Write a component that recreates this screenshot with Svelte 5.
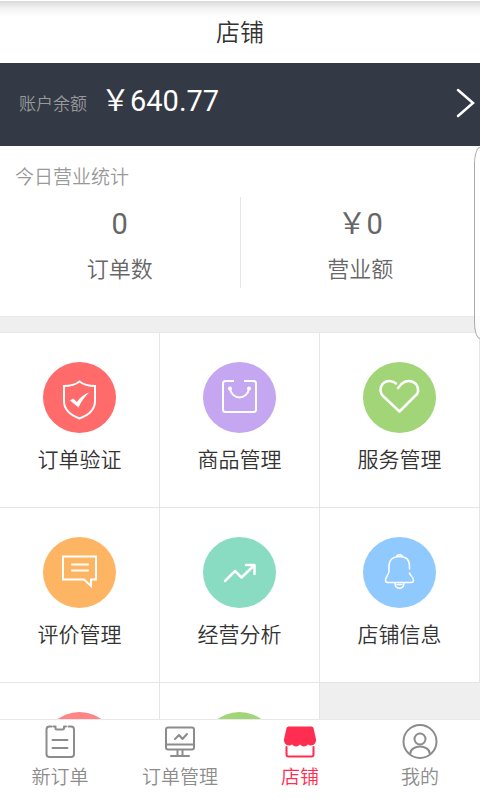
<script>
  const menus = [
    { name: '订单验证', icon: 'shield', color: 'red' },
    { name: '商品管理', icon: 'bag', color: 'purple' },
    { name: '服务管理', icon: 'heart', color: 'green' },
    { name: '评价管理', icon: 'comment', color: 'orange' },
    { name: '经营分析', icon: 'chart', color: 'teal' },
    { name: '店铺信息', icon: 'bell', color: 'blue' },
    { name: '', icon: '', color: 'pink' },
    { name: '', icon: '', color: 'green' }
  ];

  const tabs = [
    { name: '新订单', icon: 'order' },
    { name: '订单管理', icon: 'screen' },
    { name: '店铺', icon: 'shop' },
    { name: '我的', icon: 'user' }
  ];

  let balance = $state('640.77');
  let orderCount = $state(0);
  let turnover = $state(0);
  let current = $state('shop');
</script>

<div class="page">
  <header class="title-bar">
    <h1>店铺</h1>
  </header>

  <main>
    <button class="balance" type="button">
      <span class="balance-label">账户余额</span>
      <span class="balance-value">￥{balance}</span>
      <svg class="arrow" viewBox="0 0 20 30" aria-hidden="true">
        <path d="M3 2L18 15L3 28" />
      </svg>
    </button>

    <section class="stats">
      <h2>今日营业统计</h2>
      <div class="stats-row">
        <div class="stat">
          <span class="stat-value">{orderCount}</span>
          <span class="stat-label">订单数</span>
        </div>
        <div class="stat">
          <span class="stat-value">￥{turnover}</span>
          <span class="stat-label">营业额</span>
        </div>
      </div>
    </section>

    <nav class="menu">
      {#each menus as menu}
        <button class="menu-item" type="button">
          <span class="circle {menu.color}">
            <svg viewBox="0 0 73 71" aria-hidden="true">
              {#if menu.icon === 'shield'}
                <path d="M36.5 19.5C32 23 27 24 21 24V39C21 47 27 53 36.5 56.5C46 53 52 47 52 39V24C46 24 41 23 36.5 19.5Z" />
                <path class="solid" d="M27 38.5L30 36.5L34 40C37 35.5 41 32 46 30.5C42 34.5 38 39.5 35.5 45.5Z" />
              {:else if menu.icon === 'bag'}
                <path d="M31 19H22.5Q20 19 20 21.5V47.5Q20 50 22.5 50H50.5Q53 50 53 47.5V21.5Q53 19 50.5 19H41" />
                <path d="M27 27C28 32 32 35.5 36.5 35.5S45 32 46 27" />
                <circle class="solid" cx="27" cy="26.5" r="2" />
                <circle class="solid" cx="46" cy="26.5" r="2" />
              {:else if menu.icon === 'heart'}
                <path class="thick" d="M33 21.5C29 18 23 18 19.5 22C16.5 26 17 31 20 34L36.5 49.5L52 34C56 31 56 26 53 22C49 18 42.5 18 38.5 22L35 26" />
              {:else if menu.icon === 'comment'}
                <path d="M20 19.5H53V42.5H48V49L41 42.5H20Z" />
                <path d="M29 27.5H45M29 33.5H45" stroke-linecap="round" />
              {:else if menu.icon === 'chart'}
                <path class="thick" d="M22 44L32 34L38.5 40.5L51 28.5M43 28H51.5V37" />
              {:else if menu.icon === 'bell'}
                <path class="thin" d="M46.5 32V29C46.5 23 43 19.5 36.5 19.5S26 23 26 29V34C26 38 22.5 39.5 22.5 43.5Q22.5 45.5 25 45.5H48Q50.5 45.5 50.5 43.5C50.5 40 47 38.5 46.5 36" />
                <path class="thin" d="M33.5 20C34 17 39 17 39.5 20M32 46C32 53 41 53 41 46M34 47.5H39" />
              {/if}
            </svg>
          </span>
          <span class="menu-name">{menu.name}</span>
        </button>
      {/each}
    </nav>
  </main>

  <nav class="tabs">
    {#each tabs as tab}
      <button class="tab" class:active={current === tab.icon} type="button" onclick={() => (current = tab.icon)}>
        <svg viewBox="0 0 36 36" aria-hidden="true">
          {#if tab.icon === 'order'}
            <path d="M9.5 2.5H7.5Q4.5 2.5 4.5 5.5V30Q4.5 33 7.5 33H29Q32 33 32 30V5.5Q32 2.5 29 2.5H26.5M11.5 2.5H13.5V4Q13.5 5.5 15 5.5H20.5Q22 5.5 22 4V2.5H24" />
            <path d="M10.5 16H25.5M10.5 24H25.5" />
          {:else if tab.icon === 'screen'}
            <rect x="4" y="3.5" width="28" height="22" rx="2" />
            <path d="M4 20.5H32M15.5 26V31M20.5 26V31M9 32H27" />
            <path d="M13 15L17 11L20.5 15L25 10" />
          {:else if tab.icon === 'shop'}
            <path class="solid" d="M6.5 2.5H29.5Q31 2.5 31.5 4L34 15.5C34.5 20 30 23 26 20.5C23.5 23 20.5 23 18 20.5C15.5 23 12.5 23 10 20.5C6 23 1.5 20 2 15.5L4.5 4Q5 2.5 6.5 2.5Z" />
            <path d="M4.5 23V30.5Q4.5 32.5 6.5 32.5H29.5Q31.5 32.5 31.5 30.5V23" />
          {:else}
            <circle cx="18" cy="17.5" r="16.5" />
            <circle cx="18" cy="15" r="5.5" />
            <path d="M8 30C9 20 27 20 28 30" />
          {/if}
        </svg>
        <span>{tab.name}</span>
      </button>
    {/each}
  </nav>

  <div class="edge-handle"></div>
</div>

<style>
  :global(body) {
    margin: 0;
    background: #efefef;
  }

  .page {
    display: flex;
    flex-direction: column;
    height: 100vh;
    font-family: Roboto, "Noto Sans CJK SC", sans-serif;
    font-weight: 350;
    color: #333;
  }

  button {
    margin: 0;
    padding: 0;
    border: none;
    background: none;
    font: inherit;
    color: inherit;
    cursor: pointer;
  }

  h1,
  h2 {
    margin: 0;
    font-weight: inherit;
  }

  svg {
    fill: none;
    stroke: currentColor;
    stroke-width: 2;
  }

  .solid {
    fill: currentColor;
    stroke: none;
  }

  .title-bar {
    flex: none;
    height: 63px;
    background: linear-gradient(#fff 1px, #d8d9d8 1px, #f2f2f2 8px, #fff 17px);
  }

  h1 {
    font-size: 24px;
    line-height: 66px;
    text-align: center;
  }

  main {
    flex: 1;
    min-height: 0;
    overflow-y: auto;
    scrollbar-width: none;
  }

  .balance {
    display: flex;
    box-sizing: border-box;
    align-items: center;
    width: 100%;
    height: 83px;
    padding: 0 5px 8px 19px;
    background: #333a46;
    color: #fff;
    line-height: 40px;
  }

  .balance-label {
    margin-right: 14px;
    padding-top: 6px;
    font-size: 17px;
    color: #999;
  }

  .balance-value {
    font-size: 29px;
    font-weight: 400;
  }

  .arrow {
    width: 20px;
    height: 30px;
    margin-top: 4px;
    margin-left: auto;
    stroke-linecap: round;
    stroke-width: 2.5;
  }

  .stats {
    padding: 16px 0 28px;
    border-bottom: 1px solid #e8e8e8;
    background: #fff;
  }

  h2 {
    padding-left: 15px;
    font-size: 19px;
    line-height: 32px;
    color: #999;
  }

  .stats-row {
    display: flex;
    margin-top: 3px;
  }

  .stat {
    box-sizing: border-box;
    display: flex;
    flex: 1;
    flex-direction: column;
    align-items: center;
    height: 91px;
    color: #666;
  }

  .stat:first-child {
    border-right: 1px solid #e5e5e5;
  }

  .stat-value {
    font-size: 29px;
    font-weight: 400;
    line-height: 54px;
  }

  .stat-label {
    font-size: 22px;
    line-height: 38px;
  }

  .menu {
    display: grid;
    grid-template-columns: repeat(3, 1fr);
    margin-top: 15px;
    border-top: 1px solid #e8e8e8;
  }

  .menu-item {
    display: flex;
    flex-direction: column;
    align-items: center;
    height: 175px;
    padding-top: 29px;
    border-right: 1px solid #e5e5e5;
    border-bottom: 1px solid #e5e5e5;
    background: #fff;
  }

  .circle {
    width: 73px;
    height: 71px;
    border-radius: 50%;
    color: #fff;
  }

  .circle svg {
    display: block;
    width: 73px;
    height: 71px;
  }

  .thick {
    stroke-width: 2.5;
    stroke-linecap: round;
    stroke-linejoin: round;
  }

  .thin {
    stroke-width: 1.5;
    stroke-linecap: round;
  }

  .red { background: #ff6a6a; }
  .purple { background: #c5a6f1; }
  .green { background: #a2d478; }
  .orange { background: #fdb563; }
  .teal { background: #89dbc2; }
  .blue { background: #90c9fe; }
  .pink { background: #ff8587; }

  .menu-name {
    margin-top: 10px;
    font-size: 21px;
    line-height: 34px;
  }

  .tabs {
    display: flex;
    flex: none;
    height: 80px;
    border-top: 1px solid #e8e8e8;
    background: #fff;
  }

  .tab {
    display: flex;
    flex: 1;
    flex-direction: column;
    align-items: center;
    padding-top: 4px;
    font-size: 19px;
    line-height: 36px;
    color: #8c8c8c;
  }

  .tab svg {
    width: 36px;
    height: 36px;
    stroke-linecap: round;
    stroke-linejoin: round;
  }

  .tab.active {
    color: #ff2d4f;
  }

  /* pull-out panel handle over the right edge */
  .edge-handle {
    position: fixed;
    top: 147px;
    right: 0;
    box-sizing: border-box;
    width: 6px;
    height: 192px;
    border: 1px solid #aaa;
    border-right: none;
    border-radius: 10px 0 0 10px / 28px 0 0 28px;
    background: rgba(255, 255, 255, 0.8);
  }
</style>
